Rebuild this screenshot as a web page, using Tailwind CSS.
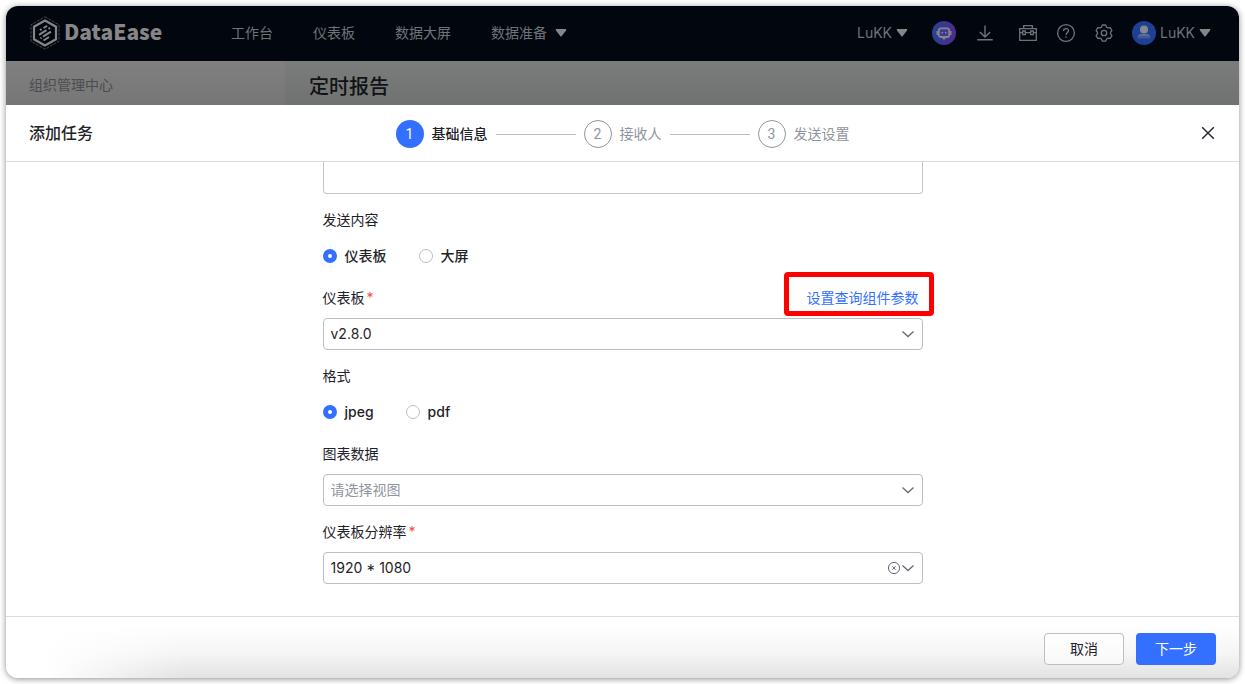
<!DOCTYPE html>
<html lang="zh-CN">
<head>
<meta charset="utf-8">
<meta name="viewport" content="width=device-width, initial-scale=1">
<title>DataEase - 定时报告</title>
<script src="https://cdn.jsdelivr.net/npm/@tailwindcss/browser@4"></script>
</head>
<body class="h-screen bg-white p-1.5 text-sm text-[#1f2329] font-[Inter,'Noto_Sans_CJK_SC',sans-serif]">
<div class="flex h-full flex-col overflow-hidden rounded-xl bg-white shadow-[0_1px_6px_rgba(0,0,0,0.45)]">

  <!-- Top bar, dimmed under the drawer mask -->
  <header class="flex h-[55px] shrink-0 items-center bg-[#02060f] pb-0.5 pl-6 pr-7 text-[#707276]">
    <a href="#" class="flex w-[201px] items-center gap-1 text-[#868686]" aria-label="DataEase">
      <svg class="h-[34px] w-[30px]" viewBox="0 0 30 34" fill="none" stroke="currentColor">
        <path d="M15 .8 29 8.800v16.400L15 33.200 1 25.200V8.800z" stroke-width="1" stroke-opacity=".5" stroke-dasharray="3 1"/>
        <path d="M15 4.500 26 10.700v12.600L15 29.500 4 23.300V10.700z" stroke-width="2.200"/>
        <path d="M10 14.200l1.500-1M13.500 12l3.500-2.200M9 18.800l7.500-4.700M18.500 12.900l1.500-1M10.500 22.300l1-.6M13 20.700l8-5M13.500 24.500l5.500-3.500" stroke-width="2"/>
      </svg>
      <span class="pb-1 text-[21px] leading-7 font-black font-['Noto_Sans_CJK_SC',sans-serif]">DataEase</span>
    </a>
    <nav class="flex items-center gap-10">
      <a href="#">工作台</a>
      <a href="#">仪表板</a>
      <a href="#">数据大屏</a>
      <a href="#" class="flex items-center gap-2">数据准备
        <svg class="h-2 w-3" viewBox="0 0 12 8" fill="#868686"><path d="M1.500 0h9Q12 0 11 1.400L6.800 7q-.8 1-1.600 0L1 1.400Q0 0 1.500 0z"/></svg>
      </a>
    </nav>
    <div class="ml-auto flex items-center">
      <button class="flex items-center gap-1">LuKK
        <svg class="h-2 w-3" viewBox="0 0 12 8" fill="#868686"><path d="M1.500 0h9Q12 0 11 1.400L6.800 7q-.8 1-1.600 0L1 1.400Q0 0 1.500 0z"/></svg>
      </button>
      <button class="ml-6" aria-label="智能助手">
        <svg class="size-6" viewBox="0 0 24 24" fill="none">
          <defs><linearGradient id="bot" x1="0" y1="0" x2="1" y2="0"><stop stop-color="#264391"/><stop offset="1" stop-color="#502a8c"/></linearGradient></defs>
          <circle cx="12" cy="12" r="12" fill="url(#bot)"/>
          <path d="M5.500 10v4M18.500 10v4" stroke="#85868c" stroke-width="2"/>
          <rect x="6.800" y="7.300" width="10.400" height="8.700" rx="2" fill="#3d3a92" stroke="#85868c" stroke-width="1.800"/>
          <path d="M10.200 11v1.500M13.800 11v1.500" stroke="#9a9ba2" stroke-width="1.200"/>
          <path d="M10 17h4l-2 2z" fill="#85868c"/>
        </svg>
      </button>
      <button class="ml-5" aria-label="下载">
        <svg class="size-[18px]" viewBox="0 0 18 18" fill="none" stroke="currentColor" stroke-width="1.400"><path d="M9 1.500V13M3.800 8 9 13l5.200-5M1.200 15.800h15.600"/></svg>
      </button>
      <button class="ml-6" aria-label="工具箱">
        <svg class="size-5" viewBox="0 0 20 20" fill="none" stroke="currentColor" stroke-width="1.300"><path d="M1.700 5.700h16.600v11.600H1.700zM5.700 5.700v-3h8.600v3M1.700 9.700h3M7.300 9.700h5.400M15.300 9.700h3M4.700 8h2.600v3.600H4.700zM12.700 8h2.600v3.600h-2.600z"/></svg>
      </button>
      <button class="ml-[18px]" aria-label="帮助">
        <svg class="size-5" viewBox="0 0 20 20" fill="none" stroke="currentColor" stroke-width="1.300"><circle cx="10" cy="10" r="8.400"/><path d="M7.600 8c0-3.200 4.900-3.200 4.900-.2 0 1.800-2.500 1.900-2.500 4.200"/><path d="M10 13.300v1.500"/></svg>
      </button>
      <button class="ml-[18px]" aria-label="系统设置">
        <svg class="size-5" viewBox="0 0 20 20" fill="none" stroke="currentColor" stroke-width="1.300" stroke-linejoin="round"><path d="M8.300 2h3.400l.9 2.200 1.300.7 2.300-.3L17.900 7.500 16.500 9.400v1.300l1.400 1.900-1.700 2.900-2.300-.3-1.300.7-.9 2.200H8.300l-.9-2.200-1.300-.7-2.300.3-1.700-2.900 1.400-1.900V9.400L2.100 7.500l1.700-2.900 2.300.3 1.300-.7z"/><circle cx="10" cy="10" r="2.700"/></svg>
      </button>
      <button class="ml-[18px] flex items-center gap-1">
        <svg class="size-6" viewBox="0 0 24 24"><defs><linearGradient id="man" x1="0" y1="0" x2="0" y2="1"><stop stop-color="#6c7690"/><stop offset="1" stop-color="#20439a"/></linearGradient></defs><circle cx="12" cy="12" r="12" fill="#1d4094"/><circle cx="12" cy="8.500" r="4" fill="#858891"/><path d="M5.500 18.500v-1.700q0-3.800 4-3.800h5q4 0 4 3.800v1.700z" fill="url(#man)"/></svg>
        <span>LuKK</span>
        <svg class="h-2 w-3" viewBox="0 0 12 8" fill="#868686"><path d="M1.500 0h9Q12 0 11 1.400L6.800 7q-.8 1-1.600 0L1 1.400Q0 0 1.500 0z"/></svg>
      </button>
    </div>
  </header>

  <div class="flex h-11 shrink-0 items-center">
    <div class="flex h-full w-[279px] items-center bg-linear-to-b from-[#808080] to-[#767676] pl-[23px] pt-1 text-[#4a4c50]">组织管理中心</div>
    <h1 class="flex h-full flex-1 items-center bg-linear-to-b from-[#7b7d7c] to-[#707271] pl-6 pt-2 text-xl font-medium text-[#101215]">定时报告</h1>
  </div>

  <!-- Drawer -->
  <section class="flex min-h-0 flex-1 flex-col" aria-labelledby="drawer-title">
    <div class="grid h-[57px] shrink-0 grid-cols-[1fr_auto_1fr] items-center border-b border-[#dcdddf] px-[23px]">
      <h2 id="drawer-title" class="text-base font-medium">添加任务</h2>
      <ol class="flex items-center gap-2 pt-0.5 text-[#8f959e]">
        <li class="flex items-center gap-2 font-medium text-[#1f2329]"><span class="flex size-7 items-center justify-center rounded-full bg-[#3370ff] font-normal text-white font-[Roboto]">1</span>基础信息</li>
        <li class="h-px w-20 bg-[#bbbfc4]" role="presentation"></li>
        <li class="flex items-center gap-2"><span class="flex size-7 items-center justify-center rounded-full border border-[#8f959e] font-[Roboto]">2</span>接收人</li>
        <li class="h-px w-20 bg-[#bbbfc4]" role="presentation"></li>
        <li class="flex items-center gap-2"><span class="flex size-7 items-center justify-center rounded-full border border-[#8f959e] font-[Roboto]">3</span>发送设置</li>
      </ol>
      <button class="justify-self-end" aria-label="关闭">
        <svg class="size-4" viewBox="0 0 16 16" fill="none" stroke="#1f2329" stroke-width="1.400"><path d="m2.200 2.200 11.600 11.600M13.800 2.200 2.200 13.800"/></svg>
      </button>
    </div>

    <form class="min-h-0 flex-1 overflow-hidden">
      <div class="mx-auto flex max-w-[600px] flex-col gap-4 leading-5">
        <textarea aria-label="报告内容" class="block h-8 w-full resize-none rounded-b border border-t-0 border-[#c4c6ca] px-2"></textarea>

        <fieldset>
          <legend class="mb-2.5">发送内容</legend>
          <div class="flex h-8 items-center gap-8 font-medium">
            <label class="flex items-center gap-2"><input type="radio" name="content" checked class="size-3.5 appearance-none rounded-full border border-[#bbbfc4] bg-white checked:border-5 checked:border-[#3370ff]">仪表板</label>
            <label class="flex items-center gap-2"><input type="radio" name="content" class="size-3.5 appearance-none rounded-full border border-[#bbbfc4] bg-white checked:border-5 checked:border-[#3370ff]">大屏</label>
          </div>
        </fieldset>

        <div>
          <div class="relative mb-2.5 flex justify-between pr-1">
            <label for="dashboard">仪表板<span class="ml-0.5 text-[#f54a45]">*</span></label>
            <button type="button" class="text-[#3370ff]">设置查询组件参数</button>
            <span class="pointer-events-none absolute -right-[11px] -top-4 h-11 w-[150px] rounded-sm border-5 border-[#ff0000]"></span>
          </div>
          <div class="relative">
            <select id="dashboard" class="block h-8 w-full appearance-none rounded border border-[#bbbfc4] bg-white px-[7px]"><option>v2.8.0</option></select>
            <svg class="pointer-events-none absolute right-[7px] top-2 size-4" viewBox="0 0 16 16" fill="none" stroke="#646a73" stroke-width="1.300"><path d="m2.500 5.500 5.500 5 5.500-5"/></svg>
          </div>
        </div>

        <fieldset>
          <legend class="mb-2.5">格式</legend>
          <div class="flex h-8 items-center gap-8 font-medium">
            <label class="flex items-center gap-2"><input type="radio" name="format" checked class="size-3.5 appearance-none rounded-full border border-[#bbbfc4] bg-white checked:border-5 checked:border-[#3370ff]">jpeg</label>
            <label class="flex items-center gap-2"><input type="radio" name="format" class="size-3.5 appearance-none rounded-full border border-[#bbbfc4] bg-white checked:border-5 checked:border-[#3370ff]">pdf</label>
          </div>
        </fieldset>

        <div>
          <label for="view" class="mb-2.5 block">图表数据</label>
          <div class="relative">
            <select id="view" class="block h-8 w-full appearance-none rounded border border-[#bbbfc4] bg-white px-[7px] text-[#8f959e]"><option>请选择视图</option></select>
            <svg class="pointer-events-none absolute right-[7px] top-2 size-4" viewBox="0 0 16 16" fill="none" stroke="#646a73" stroke-width="1.300"><path d="m2.500 5.500 5.500 5 5.500-5"/></svg>
          </div>
        </div>

        <div>
          <label for="resolution" class="mb-2.5 block">仪表板分辨率<span class="ml-0.5 text-[#f54a45]">*</span></label>
          <div class="relative">
            <select id="resolution" class="block h-8 w-full appearance-none rounded border border-[#bbbfc4] bg-white px-[7px]"><option>1920 * 1080</option></select>
            <button type="button" class="absolute right-[22px] top-[9px]" aria-label="清除">
              <svg class="block size-3.5" viewBox="0 0 14 14" fill="none" stroke="#646a73"><circle cx="7" cy="7" r="5.600"/><path d="m5.300 5.300 3.400 3.400M8.700 5.300 5.300 8.700"/></svg>
            </button>
            <svg class="pointer-events-none absolute right-[7px] top-2 size-4" viewBox="0 0 16 16" fill="none" stroke="#646a73" stroke-width="1.300"><path d="m2.500 5.500 5.500 5 5.500-5"/></svg>
          </div>
        </div>
      </div>
    </form>

    <footer class="flex h-[62px] shrink-0 items-center justify-end gap-3 border-t border-[#dcdddf] bg-[linear-gradient(to_right,#fff_40px,#fff0_180px),linear-gradient(to_bottom,#fff_15%,#f5f5f5_60%,#e2e2e2)] pr-[23px] pt-0.5">
      <button class="h-8 w-20 rounded border border-[#bbbfc4] bg-white/60">取消</button>
      <button class="h-8 w-20 rounded bg-[#3370ff] text-white">下一步</button>
    </footer>
  </section>
</div>
</body>
</html>
